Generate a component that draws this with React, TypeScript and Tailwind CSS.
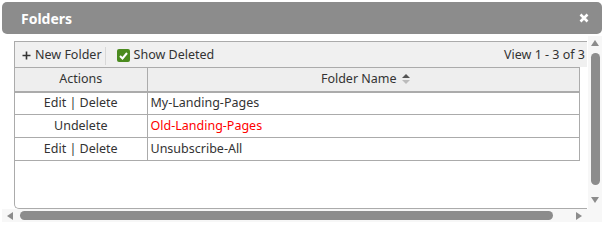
import React from 'react';

const rows = [
  { action: 'Edit | Delete', name: 'My-Landing-Pages', deleted: false },
  { action: 'Undelete', name: 'Old-Landing-Pages', deleted: true },
  { action: 'Edit | Delete', name: 'Unsubscribe-All', deleted: false },
];

export default function App() {
  return (
    <div className="w-[604px] h-[225px] bg-white flex flex-col text-[12.5px] text-[#333] font-['Noto_Sans',sans-serif]">
      {/* title bar */}
      <div className="mx-[2px] mt-[2px] h-[32px] shrink-0 rounded-[5px] bg-[#8c8c8c] flex items-center justify-between pl-[19px] pr-[13px]">
        <span className="text-white font-bold text-[14px]">Folders</span>
        <svg width="10" height="10" viewBox="0 0 10 10">
          <path d="M1.5 1.5 L8.5 8.5 M8.5 1.5 L1.5 8.5" stroke="#fff" strokeWidth="2.6" />
        </svg>
      </div>

      <div className="flex mt-[2px] h-[173px]">
        <div className="w-[14px] shrink-0" />
        {/* panel */}
        <div className="mt-[5px] w-[573px] h-[168px] border-l border-t border-b border-[#ababab] rounded-bl-[5px] flex flex-col">
          <div className="h-[25px] bg-[#f0f0f0] flex items-center pt-[2px] pl-[7px] pr-[2px]">
            <span className="flex items-center gap-[4px]">
              <svg width="9" height="9" viewBox="0 0 9 9">
                <path d="M4.5 0.5 V8.5 M0.5 4.5 H8.5" stroke="#333" strokeWidth="1.6" />
              </svg>
              New Folder
            </span>
            <span className="ml-[3px] w-px h-[18px] bg-[#d8d8d8]" />
            <span className="ml-[11px] flex items-center gap-[4px]">
              <span className="w-[13px] h-[13px] rounded-[2px] bg-[#4b8b1f] flex items-center justify-center">
                <svg width="9" height="8" viewBox="0 0 9 8">
                  <path d="M1 4 L3.5 6.5 L8 1" stroke="#fff" strokeWidth="2" fill="none" />
                </svg>
              </span>
              Show Deleted
            </span>
            <span className="ml-auto">View 1 - 3 of 3</span>
          </div>
          <table className="w-[565px] border-collapse">
            <thead>
              <tr className="h-[24px] bg-[#eeeeee]">
                <th className="w-[132px] font-normal border border-l-0 border-[#ababab] border-b-2">Actions</th>
                <th className="font-normal border border-[#ababab] border-b-2">
                  <span className="inline-flex items-center gap-[5px] ml-[4px]">
                    Folder Name
                    <svg width="8" height="10" viewBox="0 0 8 10">
                      <path d="M4 0 L8 4 H0 Z" fill="#555" />
                      <path d="M4 10 L8 6 H0 Z" fill="#bbb" />
                    </svg>
                  </span>
                </th>
              </tr>
            </thead>
            <tbody>
              {rows.map((r) => (
                <tr key={r.name} className="h-[23px]">
                  <td className="text-center border border-l-0 border-[#ababab]">{r.action}</td>
                  <td className={`pl-[3px] border border-[#ababab] ${r.deleted ? 'text-[#ff0000]' : ''}`}>{r.name}</td>
                </tr>
              ))}
            </tbody>
          </table>
        </div>
        {/* vertical scrollbar */}
        <div className="ml-[1px] w-[14px] bg-[#f7f7f7] flex flex-col items-center pt-[4px]">
          <svg width="8" height="6" viewBox="0 0 8 6">
            <path d="M4 0 L8 6 H0 Z" fill="#8c8c8c" />
          </svg>
          <div className="mt-[7px] w-[9px] h-[132px] rounded-[5px] bg-[#8c8c8c]" />
          <svg className="mt-[12px]" width="8" height="6" viewBox="0 0 8 6">
            <path d="M0 0 H8 L4 6 Z" fill="#8c8c8c" />
          </svg>
        </div>
      </div>

      {/* horizontal scrollbar */}
      <div className="mx-[2px] h-[13px] bg-[#f7f7f7] flex items-center pl-[5px]">
        <svg width="6" height="8" viewBox="0 0 6 8">
          <path d="M6 0 V8 L0 4 Z" fill="#8c8c8c" />
        </svg>
        <div className="ml-[7px] w-[533px] h-[9px] rounded-[5px] bg-[#8c8c8c]" />
        <svg className="ml-[23px]" width="6" height="8" viewBox="0 0 6 8">
          <path d="M0 0 L6 4 L0 8 Z" fill="#8c8c8c" />
        </svg>
      </div>
    </div>
  );
}
